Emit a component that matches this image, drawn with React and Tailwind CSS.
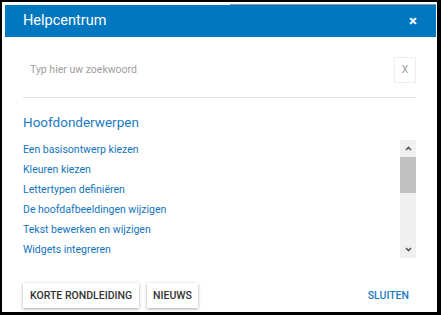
import React from 'react';

const topics = [
  'Een basisontwerp kiezen',
  'Kleuren kiezen',
  'Lettertypen definiëren',
  'De hoofdafbeeldingen wijzigen',
  'Tekst bewerken en wijzigen',
  'Widgets integreren',
];

const App = () => {
  return (
    <div className="w-[441px] h-[315px] bg-black pt-[2px] pl-[2px] pr-[4px] pb-[3px] font-['Roboto',sans-serif]">
      <div className="h-full bg-white pl-[3px] pr-[1px] flex flex-col">
        {/* thin strip above header */}
        <div className="h-[3px] flex items-end">
          <div className="ml-[225px] flex-1 h-[1px] bg-[#9a9a9a]" />
        </div>

        {/* Header */}
        <div className="h-[32px] bg-[#0077be] flex items-center justify-between pl-[18px] pr-[19px]">
          <h1 className="text-white text-[14.5px] leading-none pt-[1px]">Helpcentrum</h1>
          <button className="text-white text-[15px] font-bold leading-none">×</button>
        </div>

        {/* Body */}
        <div className="flex-1 flex flex-col pl-[18px] pr-[20px]">
          {/* Search */}
          <div className="mt-[20px] h-[26px] flex items-center justify-between">
            <span className="pl-[7px] text-[10.5px] text-[#9e9e9e]">Typ hier uw zoekwoord</span>
            <div className="w-[22px] h-[26px] border border-[#eeeeee] flex items-center justify-center text-[10.5px] text-[#9e9e9e]">
              X
            </div>
          </div>
          <div className="mt-[14px] border-t border-[#e3e3e3]" />

          <h2 className="mt-[14px] text-[13.5px] leading-[20px] text-[#1a7cc1]">Hoofdonderwerpen</h2>

          {/* Topic list */}
          <div className="mt-[8px] flex">
            <ul className="flex-1">
              {topics.map((t) => (
                <li key={t} className="h-[20px] flex items-center text-[10.5px] text-[#1273bd]">
                  {t}
                </li>
              ))}
            </ul>
            <div className="w-[16px] h-[118px] bg-[#f0f0f0] flex flex-col items-center">
              <svg width="9" height="17" viewBox="0 0 9 17" className="shrink-0">
                <path d="M2 10 L4.5 7.5 L7 10" fill="none" stroke="#555" strokeWidth="1.6" />
              </svg>
              <div className="w-full h-[36px] bg-[#c1c1c1]" />
              <div className="flex-1" />
              <svg width="9" height="15" viewBox="0 0 9 15" className="shrink-0">
                <path d="M2 5 L4.5 7.5 L7 5" fill="none" stroke="#555" strokeWidth="1.6" />
              </svg>
            </div>
          </div>

          {/* Footer */}
          <div className="mt-[23px] flex items-center">
            <button className="h-[25px] px-[7px] text-[10.5px] font-medium text-[#333] bg-white shadow-[0_1px_3px_rgba(0,0,0,0.35)]">
              KORTE RONDLEIDING
            </button>
            <button className="ml-[8px] h-[25px] px-[6px] text-[10.5px] font-medium text-[#333] bg-white shadow-[0_1px_3px_rgba(0,0,0,0.35)]">
              NIEUWS
            </button>
            <button className="ml-auto mr-[7px] h-[25px] text-[10.5px] font-medium text-[#1a7cc1]">SLUITEN</button>
          </div>
        </div>
      </div>
    </div>
  );
};

export default App;
